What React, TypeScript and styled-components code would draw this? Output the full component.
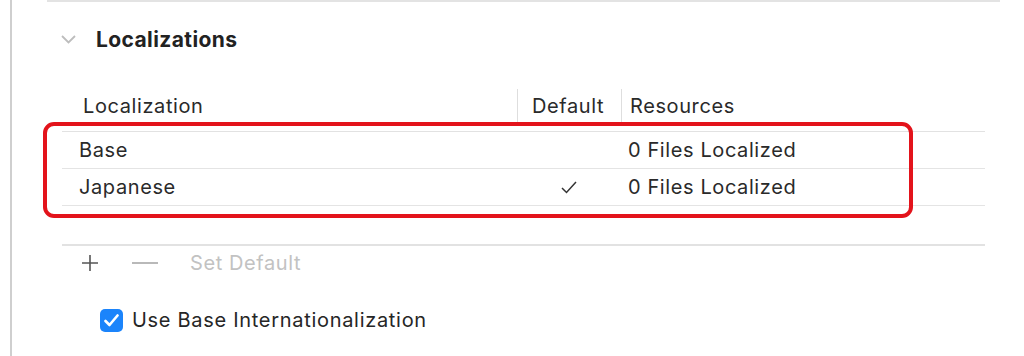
import React from 'react';
import styled, { createGlobalStyle } from 'styled-components';

const GlobalStyle = createGlobalStyle`
  html, body {
    margin: 0;
    padding: 0;
    background: #ffffff;
  }
  body {
    font-family: Inter, "Noto Sans", sans-serif;
    color: #262626;
  }
`;

const Page = styled.div`
  position: relative;
  width: 1024px;
  height: 356px;
  overflow: hidden;
  background: #ffffff;
  padding-left: 10px;
  box-sizing: border-box;
`;

const Rail = styled.div`
  height: 100%;
  border-left: 2px solid #cfcfcf;
  padding-left: 35px;
  box-sizing: border-box;
`;

const TopRule = styled.div`
  width: 953px;
  height: 2px;
  background: #e3e3e3;
`;

const SectionHeader = styled.div`
  display: flex;
  align-items: center;
  height: 24px;
  margin-top: 25px;
  padding-left: 14px;
  gap: 20px;
`;

const SectionTitle = styled.div`
  font-size: 21px;
  font-weight: 700;
  color: #222;
  letter-spacing: 0.4px;
`;

const Table = styled.div`
  margin-top: 38px;
  margin-left: 15px;
  width: 923px;
`;

const HeaderRow = styled.div`
  display: flex;
  align-items: flex-start;
  height: 42px;
  border-bottom: 1px solid #e2e2e2;
`;

const HeaderCell = styled.div<{ $width?: number; $pad: number; $divider?: boolean }>`
  display: flex;
  align-items: center;
  height: 33px;
  box-sizing: border-box;
  width: ${(p) => (p.$width ? `${p.$width}px` : 'auto')};
  flex: ${(p) => (p.$width ? 'none' : '1')};
  padding-left: ${(p) => p.$pad}px;
  border-left: ${(p) => (p.$divider ? '1px solid #dedede' : 'none')};
  font-size: 20px;
  letter-spacing: 0.6px;
  color: #2a2a2a;
`;

const Row = styled.div<{ $thick?: boolean }>`
  display: flex;
  align-items: center;
  height: ${(p) => (p.$thick ? 38 : 36)}px;
  border-bottom: ${(p) => (p.$thick ? '2px solid #e2e2e2' : '1px solid #e4e4e4')};
`;

const Cell = styled.div<{ $width?: number; $pad?: number; $center?: boolean }>`
  display: flex;
  align-items: center;
  justify-content: ${(p) => (p.$center ? 'center' : 'flex-start')};
  box-sizing: border-box;
  width: ${(p) => (p.$width ? `${p.$width}px` : 'auto')};
  flex: ${(p) => (p.$width ? 'none' : '1')};
  padding-left: ${(p) => p.$pad ?? 0}px;
  font-size: 20px;
  letter-spacing: 0.6px;
  color: #2a2a2a;
`;

const Toolbar = styled.div`
  display: flex;
  align-items: center;
  height: 34px;
  margin-left: 15px;
  padding-left: 19px;
`;

const ToolButton = styled.div<{ $gap: number }>`
  display: flex;
  align-items: center;
  margin-right: ${(p) => p.$gap}px;
`;

const ToolLabel = styled.div`
  font-size: 20px;
  letter-spacing: 0.6px;
  color: #c2c2c2;
`;

const CheckRow = styled.label`
  display: flex;
  align-items: center;
  gap: 9px;
  height: 24px;
  margin-top: 28px;
  margin-left: 53px;
  font-size: 20px;
  letter-spacing: 0.7px;
  color: #262626;
`;

const CheckBox = styled.span`
  display: flex;
  align-items: center;
  justify-content: center;
  width: 23px;
  height: 23px;
  border-radius: 5px;
  background: #1b84fb;
`;

const Highlight = styled.div`
  position: absolute;
  left: 43px;
  top: 122px;
  width: 870px;
  height: 96px;
  box-sizing: border-box;
  border: 4px solid #e3131b;
  border-radius: 11px;
  pointer-events: none;
`;

const rows = [
  { name: 'Base', isDefault: false, resources: '0 Files Localized' },
  { name: 'Japanese', isDefault: true, resources: '0 Files Localized' },
];

export default function App() {
  return (
    <>
      <GlobalStyle />
      <Page>
        <Rail>
          <TopRule />

          {/* Localizations header */}
          <SectionHeader>
            <svg width="15" height="9" viewBox="0 0 15 9">
              <polyline points="1,1 7.5,7.5 14,1" fill="none" stroke="#bdbdbd" strokeWidth="1.8" />
            </svg>
            <SectionTitle>Localizations</SectionTitle>
          </SectionHeader>

          <Table>
            <HeaderRow>
              <HeaderCell $width={455} $pad={21}>Localization</HeaderCell>
              <HeaderCell $width={104} $pad={14} $divider>Default</HeaderCell>
              <HeaderCell $pad={8} $divider>Resources</HeaderCell>
            </HeaderRow>
            {rows.map((r) => (
              <Row key={r.name}>
                <Cell $width={455} $pad={17}>{r.name}</Cell>
                <Cell $width={104} $center>
                  {r.isDefault && (
                    <svg width="16" height="13" viewBox="0 0 16 13">
                      <polyline points="1,7 5.5,11.5 15,1" fill="none" stroke="#333" strokeWidth="1.5" />
                    </svg>
                  )}
                </Cell>
                <Cell $pad={7}>{r.resources}</Cell>
              </Row>
            ))}
            <Row $thick />
          </Table>

          <Toolbar>
            <ToolButton $gap={33}>
              <svg width="18" height="18" viewBox="0 0 18 18">
                <path d="M9 1v16M1 9h16" stroke="#555" strokeWidth="1.6" fill="none" />
              </svg>
            </ToolButton>
            <ToolButton $gap={32}>
              <svg width="26" height="4" viewBox="0 0 26 4">
                <path d="M0 2h26" stroke="#a8a8a8" strokeWidth="1.6" fill="none" />
              </svg>
            </ToolButton>
            <ToolLabel>Set Default</ToolLabel>
          </Toolbar>

          <CheckRow>
            <CheckBox>
              <svg width="15" height="13" viewBox="0 0 15 13">
                <polyline points="1.5,7 5.5,11 13.5,1.5" fill="none" stroke="#fff" strokeWidth="2.6" strokeLinecap="round" strokeLinejoin="round" />
              </svg>
            </CheckBox>
            Use Base Internationalization
          </CheckRow>
        </Rail>

        <Highlight />
      </Page>
    </>
  );
}
